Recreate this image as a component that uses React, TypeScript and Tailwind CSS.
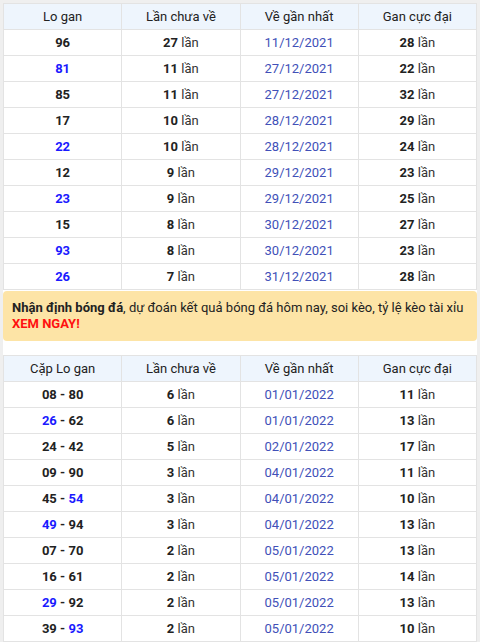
import React from 'react';

type Row = { lo: React.ReactNode; chua: number; ve: string; max: number };

const blue = (s: string) => <span className="text-[#1a1aff]">{s}</span>;

const loRows: Row[] = [
  { lo: '96', chua: 27, ve: '11/12/2021', max: 28 },
  { lo: blue('81'), chua: 11, ve: '27/12/2021', max: 22 },
  { lo: '85', chua: 11, ve: '27/12/2021', max: 32 },
  { lo: '17', chua: 10, ve: '28/12/2021', max: 29 },
  { lo: blue('22'), chua: 10, ve: '28/12/2021', max: 24 },
  { lo: '12', chua: 9, ve: '29/12/2021', max: 23 },
  { lo: blue('23'), chua: 9, ve: '29/12/2021', max: 25 },
  { lo: '15', chua: 8, ve: '30/12/2021', max: 27 },
  { lo: blue('93'), chua: 8, ve: '30/12/2021', max: 23 },
  { lo: blue('26'), chua: 7, ve: '31/12/2021', max: 28 },
];

const pair = (a: string, b: string, ba = false, bb = false) => (
  <>
    {ba ? blue(a) : a} - {bb ? blue(b) : b}
  </>
);

const capRows: Row[] = [
  { lo: pair('08', '80'), chua: 6, ve: '01/01/2022', max: 11 },
  { lo: pair('26', '62', true), chua: 6, ve: '01/01/2022', max: 13 },
  { lo: pair('24', '42'), chua: 5, ve: '02/01/2022', max: 17 },
  { lo: pair('09', '90'), chua: 3, ve: '04/01/2022', max: 11 },
  { lo: pair('45', '54', false, true), chua: 3, ve: '04/01/2022', max: 10 },
  { lo: pair('49', '94', true), chua: 3, ve: '04/01/2022', max: 13 },
  { lo: pair('07', '70'), chua: 2, ve: '05/01/2022', max: 13 },
  { lo: pair('16', '61'), chua: 2, ve: '05/01/2022', max: 14 },
  { lo: pair('29', '92', true), chua: 2, ve: '05/01/2022', max: 13 },
  { lo: pair('39', '93', false, true), chua: 2, ve: '05/01/2022', max: 10 },
];

function GanTable({ first, rows }: { first: string; rows: Row[] }) {
  const th = 'h-[26px] border border-[#e3e3e3] p-0 text-center font-normal';
  const td = 'h-[26px] border border-[#e3e3e3] p-0 text-center';
  return (
    <table className="w-full table-fixed border-collapse text-[13px] leading-[16px] text-[#222]">
      <thead>
        <tr className="bg-[#eef5fd]">
          <th className={th}>{first}</th>
          <th className={th}>Lần chưa về</th>
          <th className={th}>Về gần nhất</th>
          <th className={th}>Gan cực đại</th>
        </tr>
      </thead>
      <tbody>
        {rows.map((r, i) => (
          <tr key={i} className="bg-white">
            <td className={td + ' font-bold'}>{r.lo}</td>
            <td className={td}>
              <b>{r.chua}</b> <span className="text-[#333]">lần</span>
            </td>
            <td className={td + ' text-[#4150b8]'}>{r.ve}</td>
            <td className={td}>
              <b>{r.max}</b> <span className="text-[#333]">lần</span>
            </td>
          </tr>
        ))}
      </tbody>
    </table>
  );
}

export default function App() {
  return (
    <div
      className="min-h-[642px] w-[480px] bg-[#efefef] px-[3px] pt-[3px] pb-[2px]"
      style={{ fontFamily: 'Roboto, "Noto Sans", sans-serif' }}
    >
      <div className="bg-white">
        <GanTable first="Lo gan" rows={loRows} />
        <div className="mt-px rounded-[4px] bg-[#fde4a6] px-[9px] py-[9px] text-[13px] leading-[16px] text-[#222]">
          <b>Nhận định bóng đá</b>, dự đoán kết quả bóng đá hôm nay, soi kèo, tỷ lệ kèo tài xỉu{' '}
          <a className="font-bold text-[#ff1010]">XEM NGAY!</a>
        </div>
        <div className="h-[14px]" />
        <GanTable first="Cặp Lo gan" rows={capRows} />
      </div>
    </div>
  );
}
